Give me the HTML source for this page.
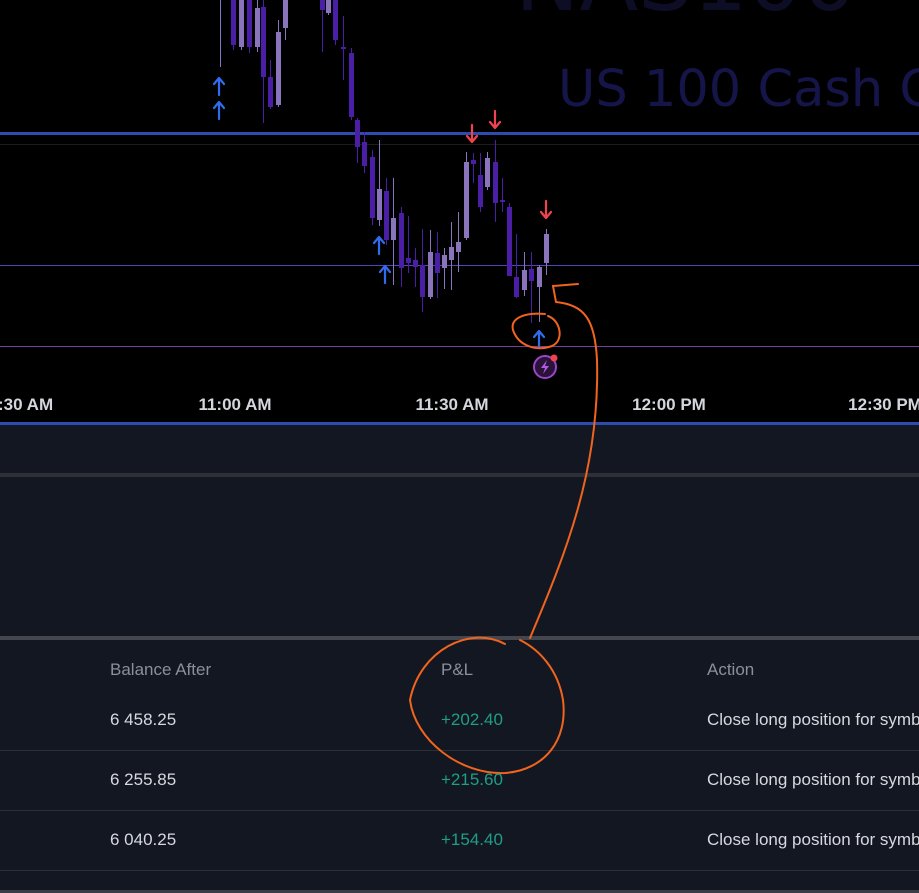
<!DOCTYPE html>
<html><head><meta charset="utf-8"><style>
html,body{margin:0;padding:0;width:919px;height:893px;overflow:hidden;background:#131722;font-family:"Liberation Sans",sans-serif}
.t{position:absolute;font-size:17px;white-space:nowrap}
</style></head><body>
<div style="position:absolute;left:0;top:0;width:919px;height:422px;background:#000"></div>
<svg style="position:absolute;left:0;top:0" width="919" height="893">
<text x="558" y="106" font-size="51" fill="#16154a" font-family="DejaVu Sans,sans-serif">US 100 Cash C</text>
<text x="515" y="10" font-size="86" fill="#0e0d26" font-family="DejaVu Sans,sans-serif">NAS100</text>
<rect x="0" y="132" width="919" height="3" fill="#2e4caf"/>
<rect x="0" y="144" width="919" height="1" fill="#1c1c1c"/>
<rect x="0" y="265" width="919" height="1" fill="#5345b8"/>
<rect x="0" y="346" width="919" height="1" fill="#7a3c9c"/>
<line x1="220.5" y1="0" x2="220.5" y2="67" stroke="#8a72c8"/>
<g id="c"></g>
<g id="a" fill="none" stroke-width="2.2" stroke-linecap="round" stroke-linejoin="round"></g>
<circle cx="545" cy="367" r="11" fill="#2a1238" stroke="#9a46c8" stroke-width="2"/>
<path d="M547,360 L541,368 L545,368 L543,374 L549,366 L545,366 Z" fill="#b05ce0"/>
<circle cx="554" cy="358" r="3.5" fill="#f0434e"/>
<g fill="#d3d6dc" font-size="17" font-weight="bold" font-family="Liberation Sans,sans-serif">
<text x="-2" y="410">:30 AM</text>
<text x="235" y="410" text-anchor="middle">11:00 AM</text>
<text x="452" y="410" text-anchor="middle">11:30 AM</text>
<text x="669" y="410" text-anchor="middle">12:00 PM</text>
<text x="885" y="410" text-anchor="middle">12:30 PM</text>
</g>
<rect x="0" y="422" width="919" height="3" fill="#2e4caf"/>
<rect x="0" y="473" width="919" height="4" fill="#2e3038"/>
<rect x="0" y="636" width="919" height="4" fill="#43464e"/>
<rect x="0" y="750" width="919" height="1" fill="#2a2e39"/>
<rect x="0" y="810" width="919" height="1" fill="#2a2e39"/>
<rect x="0" y="870" width="919" height="1" fill="#2a2e39"/>
<rect x="0" y="890" width="919" height="3" fill="#3a3d45"/>
<g fill="none" stroke="#f0641e" stroke-width="2" stroke-linecap="round">
<path d="M530,638 C565,555 600,470 597,360 C595,320 585,305 556,302 L553,286 L578,284"/>
<path d="M548,316 C560,320 565,340 552,346 C535,352 518,345 513,330 C510,318 525,312 545,314"/>
<path d="M505,644 C470,625 420,650 410,700 C415,740 460,775 505,773 C545,770 568,740 563,700 C558,670 540,650 520,640"/>
</g>
</svg>
<script>
var C=[[233,0,45,0,50,1],[241,0,47,0,50,0],[249,0,47,0,53,1],[257,8,47,0,52,0],[263,7,77,0,123,1],[270,77,107,60,109,1],[278,32,105,20,107,0],[285,0,28,0,40,0],[322,0,10,0,52,1],[328,0,13,0,15,0],[335,0,40,0,45,1],[343,47,49,16,80,1],[351,53,117,48,120,1],[357,120,147,118,163,1],[364,142,166,132,173,1],[372,157,218,150,225,1],[379,189,220,140,226,0],[386,191,240,178,245,1],[393,218,240,178,285,0],[401,213,268,207,287,1],[408,258,263,216,273,1],[415,260,267,248,287,1],[422,265,297,229,312,1],[430,252,297,230,299,0],[437,253,273,232,298,1],[444,255,268,248,289,0],[451,247,260,222,290,0],[458,242,252,212,272,0],[466,162,238,152,240,0],[473,160,164,153,183,1],[480,175,207,153,212,1],[487,158,187,152,190,0],[495,162,203,140,222,1],[502,200,201,178,212,1],[509,207,276,203,276,1],[516,277,297,234,298,1],[524,270,290,252,296,0],[531,269,281,252,323,1],[539,267,287,265,322,0],[546,234,263,229,275,0]];
var g=document.getElementById('c'),s='';
C.forEach(function(c){var col=c[5]?'#4a1fa6':'#8a74bc';
s+='<line x1="'+(c[0]+.5)+'" y1="'+c[3]+'" x2="'+(c[0]+.5)+'" y2="'+c[4]+'" stroke="'+col+'"/>';
s+='<rect x="'+(c[0]-2)+'" y="'+c[1]+'" width="5" height="'+Math.max(2,c[2]-c[1])+'" fill="'+col+'"/>';});
g.innerHTML=s;
var A=[[219,78,1],[219,102,1],[379,237,1],[385,266,1],[539,331,1],[472,125,0],[495,111,0],[546,201,0]],t='';
A.forEach(function(a){var x=a[0],y=a[1];
if(a[2]){t+='<path stroke="#2f6cf0" d="M'+x+','+(y+17)+' L'+x+','+y+' M'+(x-5)+','+(y+6)+' L'+x+','+y+' L'+(x+5)+','+(y+6)+'"/>';}
else{t+='<path stroke="#f0434e" d="M'+x+','+y+' L'+x+','+(y+17)+' M'+(x-5)+','+(y+11)+' L'+x+','+(y+17)+' L'+(x+5)+','+(y+11)+'"/>';}});
document.getElementById('a').innerHTML=t;
</script>
<div class="t" style="left:110px;top:660px;color:#8b8f99">Balance After</div>
<div class="t" style="left:441px;top:660px;color:#8b8f99">P&amp;L</div>
<div class="t" style="left:707px;top:660px;color:#8b8f99">Action</div>
<div class="t" style="left:110px;top:710px;color:#d6d9de">6 458.25</div>
<div class="t" style="left:441px;top:710px;color:#1e9e86">+202.40</div>
<div class="t" style="left:707px;top:710px;color:#d6d9de">Close long position for symbol</div>
<div class="t" style="left:110px;top:770px;color:#d6d9de">6 255.85</div>
<div class="t" style="left:441px;top:770px;color:#1e9e86">+215.60</div>
<div class="t" style="left:707px;top:770px;color:#d6d9de">Close long position for symbol</div>
<div class="t" style="left:110px;top:830px;color:#d6d9de">6 040.25</div>
<div class="t" style="left:441px;top:830px;color:#1e9e86">+154.40</div>
<div class="t" style="left:707px;top:830px;color:#d6d9de">Close long position for symbol</div>
</body></html>
